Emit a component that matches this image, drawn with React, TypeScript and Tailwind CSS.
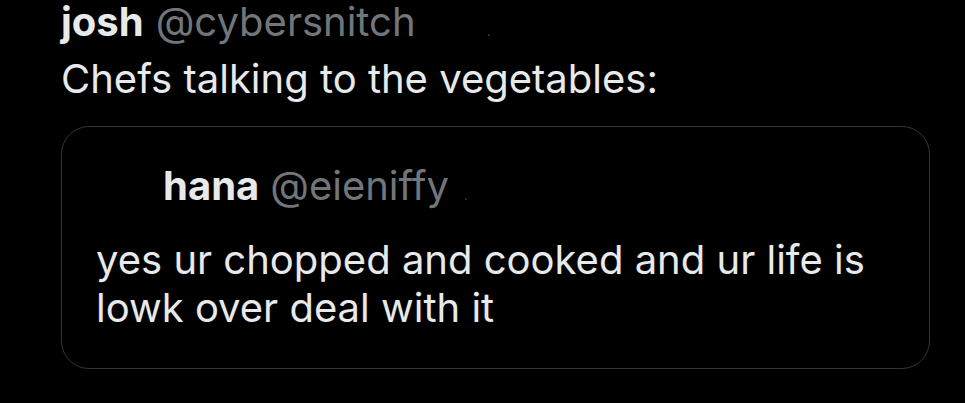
import React from 'react';

const font = { fontFamily: 'Inter, "Noto Sans", sans-serif' };

export default function App() {
  return (
    <div className="w-[965px] h-[403px] bg-black overflow-hidden" style={font}>
      <div className="pl-[61px] pr-[35px]">
        <div className="flex items-baseline h-[43px] text-[40px] leading-[43px] whitespace-nowrap">
          <span className="font-bold text-[#e7e9ea]">josh</span>
          <span className="ml-[12px] text-[#71767b]">@cybersnitch</span>
          <span className="ml-[72px] w-[2px] h-[2px] bg-[#2a2a2a]" />
        </div>
        <p className="mt-[8px] text-[40px] leading-[56px] text-[#e7e9ea] whitespace-nowrap">
          Chefs talking to the vegetables:
        </p>
        <div className="mt-[19px] h-[243px] rounded-[28px] border border-[#333639] pl-[34px] pt-[35px]">
          <div className="flex items-baseline text-[40px] leading-[48px] whitespace-nowrap">
            <div className="w-[67px] shrink-0" />
            <span className="font-bold text-[#e7e9ea]">hana</span>
            <span className="ml-[11px] text-[#71767b]">@eieniffy</span>
            <span className="ml-[16px] w-[2px] h-[2px] bg-[#2a2a2a]" />
          </div>
          <p className="mt-[26px] text-[40px] leading-[48px] text-[#e7e9ea] w-[800px]">
            yes ur chopped and cooked and ur life is lowk over deal with it
          </p>
        </div>
      </div>
    </div>
  );
}
